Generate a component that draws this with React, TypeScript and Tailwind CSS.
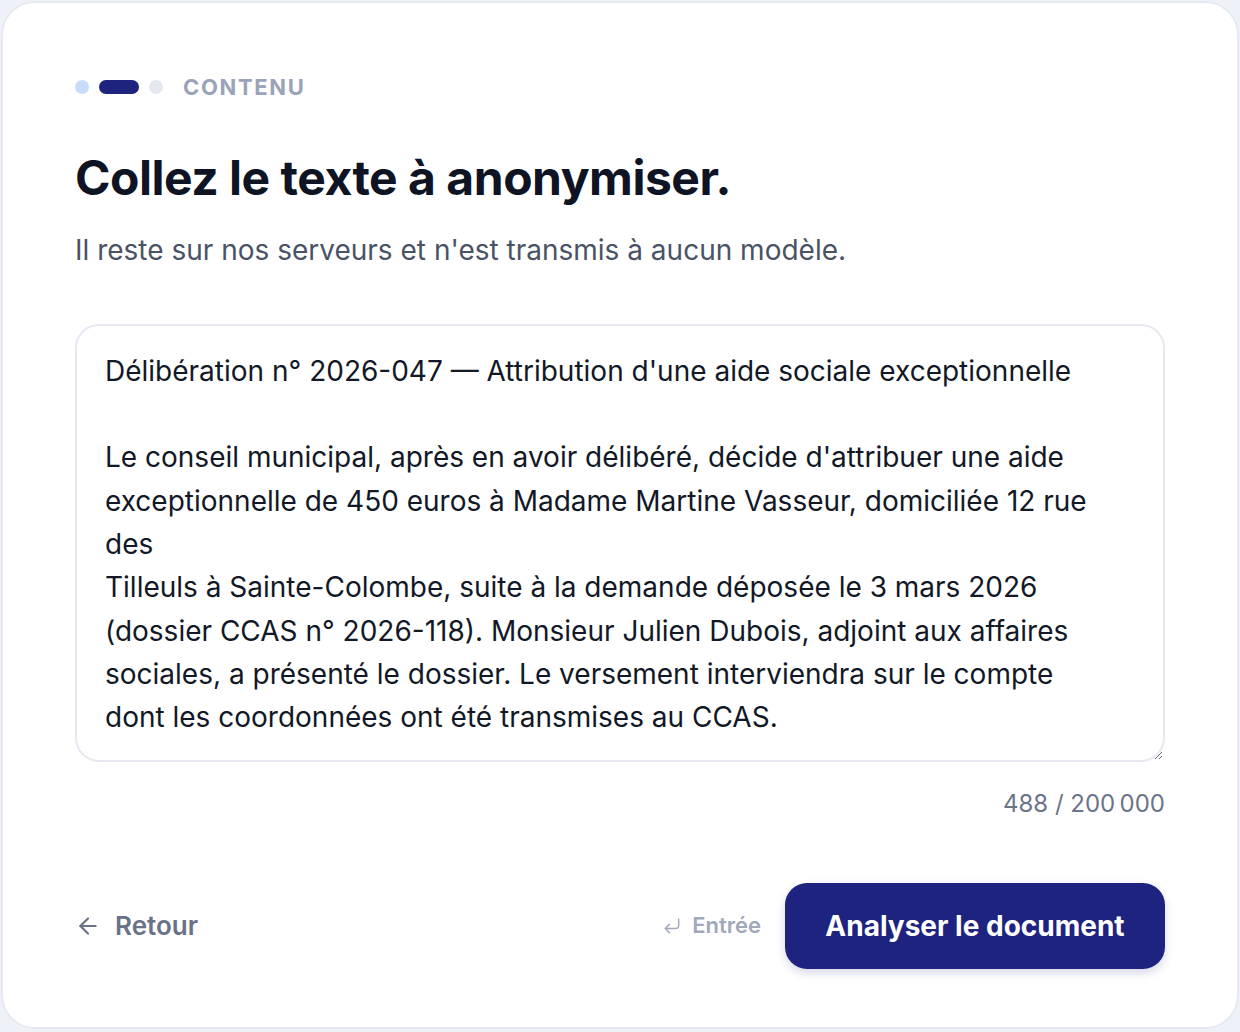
import React, { useState } from 'react';
import { ArrowLeft, CornerDownLeft } from 'lucide-react';

const INITIAL_TEXT =
  "Délibération n° 2026-047 — Attribution d'une aide sociale exceptionnelle\n" +
  '\n' +
  "Le conseil municipal, après en avoir délibéré, décide d'attribuer une aide\n" +
  'exceptionnelle de 450 euros à Madame Martine Vasseur, domiciliée 12 rue\n' +
  'des\n' +
  'Tilleuls à Sainte-Colombe, suite à la demande déposée le 3 mars 2026\n' +
  '(dossier CCAS n° 2026-118). Monsieur Julien Dubois, adjoint aux affaires\n' +
  'sociales, a présenté le dossier. Le versement interviendra sur le compte\n' +
  'dont les coordonnées ont été transmises au CCAS.';

const App: React.FC = () => {
  const [text, setText] = useState(INITIAL_TEXT);

  return (
    <div className="min-h-screen bg-[#eef1f7] p-px" style={{ fontFamily: 'Inter, "Noto Sans", sans-serif' }}>
      <div className="flex h-[1028px] w-[1238px] flex-col rounded-[34px] border-2 border-[#e6e9f2] bg-white px-[72px] pt-[73px]">
        {/* Stepper */}
        <div className="flex items-center">
          <div className="flex items-center gap-2.5">
            <span className="h-3.5 w-3.5 rounded-full bg-[#c9dbfb]" />
            <span className="h-3.5 w-10 rounded-full bg-[#1e237e]" />
            <span className="h-3.5 w-3.5 rounded-full bg-[#e5e8f0]" />
          </div>
          <span className="ml-5 text-[22px] font-bold leading-none tracking-[0.075em] text-[#9aa3b8]">CONTENU</span>
        </div>

        {/* Heading */}
        <h1 className="mt-[51px] text-[48px] font-bold leading-[1.2] tracking-[-0.01em] text-[#0e1424]">
          Collez le texte à anonymiser.
        </h1>
        <p className="mt-[24px] text-[28px] leading-[1.4] text-[#4a5365]">
          Il reste sur nos serveurs et n'est transmis à aucun modèle.
        </p>

        {/* Text input */}
        <textarea
          value={text}
          onChange={e => setText(e.target.value)}
          className="mt-[54px] h-[438px] w-full rounded-[24px] border-2 border-[#e6e9f2] px-[28px] pt-[24px] text-[28px] leading-[43.3px] text-[#121826] outline-none"
          style={{ fontFamily: 'Inter, "Noto Sans", sans-serif' }}
        />
        <div className="mt-[26px] text-right text-[24px] leading-[32px] text-[#6b7488]">
          {text.length} / 200{'\u202f'}000
        </div>

        {/* Actions */}
        <div className="mt-[63px] flex items-center justify-between">
          <button className="flex items-center gap-3.5 text-[26px] font-semibold text-[#687186]">
            <ArrowLeft size={26} strokeWidth={2} />
            Retour
          </button>
          <div className="flex items-center gap-6">
            <span className="flex items-center gap-2.5 text-[22px] font-semibold text-[#a0a8ba]">
              <CornerDownLeft size={20} strokeWidth={1.75} />
              Entrée
            </span>
            <button className="flex h-[86px] w-[380px] items-center justify-center rounded-[22px] bg-[#1e2380] text-[28px] font-bold text-white shadow-[0_4px_10px_rgba(30,35,128,0.18)]">
              Analyser le document
            </button>
          </div>
        </div>
      </div>
    </div>
  );
};

export default App;
